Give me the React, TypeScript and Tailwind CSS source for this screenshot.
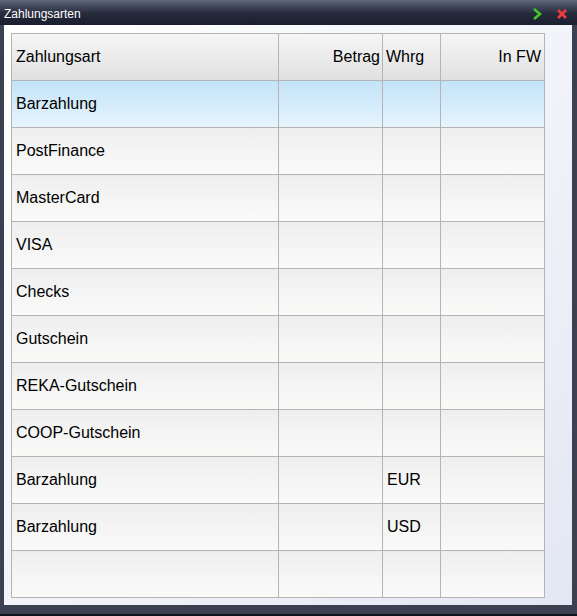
const rows: { art: string; whrg?: string; selected?: boolean }[] = [
  { art: "Barzahlung", selected: true },
  { art: "PostFinance" },
  { art: "MasterCard" },
  { art: "VISA" },
  { art: "Checks" },
  { art: "Gutschein" },
  { art: "REKA-Gutschein" },
  { art: "COOP-Gutschein" },
  { art: "Barzahlung", whrg: "EUR" },
  { art: "Barzahlung", whrg: "USD" },
  { art: "" },
];

const cell = "h-[47px] border-r border-b border-[#b4b4b4] flex items-center";

export default function App() {
  return (
    <div className="w-[577px] h-[616px] bg-[#3b4151] flex flex-col font-['Liberation_Sans',Arial,sans-serif] overflow-hidden">
      {/* title bar */}
      <div className="h-[25px] shrink-0 flex items-center px-[4px] bg-gradient-to-b from-[#565c72] via-[#262b3c] to-[#1a1f30] border-t-2 border-[#5d6478]">
        <span className="text-[12px] text-white">Zahlungsarten</span>
        <div className="ml-auto flex items-center gap-[14px] mr-[5px]">
          <svg width="10" height="12" viewBox="0 0 10 12">
            <path d="M2 1 L8 6 L2 11" fill="none" stroke="#44c92c" strokeWidth="2.6" strokeLinejoin="miter" />
          </svg>
          <svg width="12" height="12" viewBox="0 0 12 12">
            <path d="M2 2 L10 10 M10 2 L2 10" stroke="#f03c3c" strokeWidth="2.6" strokeLinecap="butt" />
          </svg>
        </div>
      </div>

      {/* content */}
      <div className="ml-[4px] mr-[5px] h-[580px] bg-gradient-to-br from-white via-[#f3f4fa] to-[#e3e7f4] pt-[8px] pl-[7px]">
        <div className="w-[534px] grid grid-cols-[267px_104px_58px_104px] border-l border-t border-[#b4b4b4] text-[16px] text-black">
          <div className={`${cell} bg-gradient-to-b from-[#f6f6f6] to-[#e0e0e0] pl-[4px]`}>Zahlungsart</div>
          <div className={`${cell} bg-gradient-to-b from-[#f6f6f6] to-[#e0e0e0] justify-end pr-[2px]`}>Betrag</div>
          <div className={`${cell} bg-gradient-to-b from-[#f6f6f6] to-[#e0e0e0] pl-[3px]`}>Whrg</div>
          <div className={`${cell} bg-gradient-to-b from-[#f6f6f6] to-[#e0e0e0] justify-end pr-[3px]`}>In FW</div>
          {rows.map((r, i) => {
            const bg = r.selected
              ? "bg-gradient-to-b from-[#c2e3f8] to-[#e7f5fd]"
              : "bg-gradient-to-b from-[#eeeeee] to-[#fafbf9]";
            return (
              <div key={i} className="contents">
                <div className={`${cell} ${bg} pl-[4px]`}>{r.art}</div>
                <div className={`${cell} ${bg}`}></div>
                <div className={`${cell} ${bg} pl-[4px]`}>{r.whrg}</div>
                <div className={`${cell} ${bg}`}></div>
              </div>
            );
          })}
        </div>
      </div>
      <div className="mt-auto h-[2px] bg-[#11141c]"></div>
    </div>
  );
}
